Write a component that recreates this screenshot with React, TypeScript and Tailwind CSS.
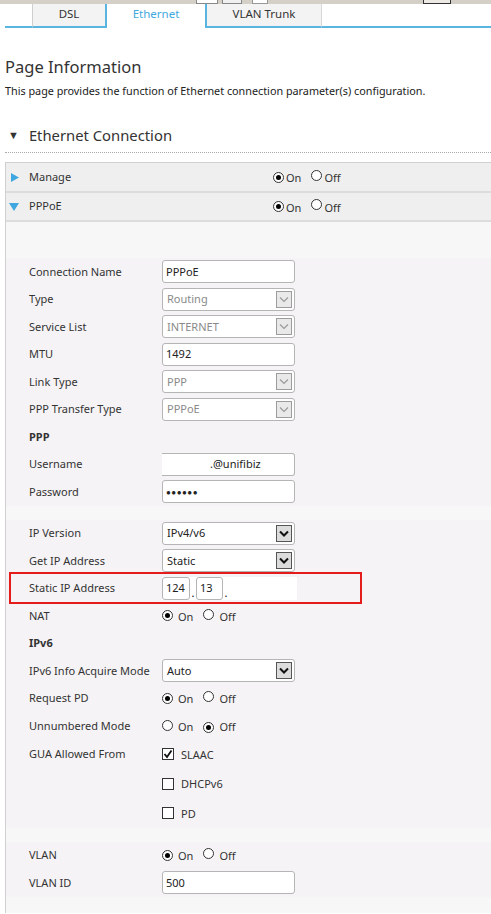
import React from "react";

const FONT = { fontFamily: '"Noto Sans", "Open Sans", Arial, sans-serif' };

function Radio({ checked }: { checked: boolean }) {
  return (
    <span className="inline-flex items-center justify-center w-[11px] h-[11px] rounded-full border border-[#333] bg-white shrink-0">
      {checked && <span className="w-[5px] h-[5px] rounded-full bg-black" />}
    </span>
  );
}

function RadioPair({ on, small }: { on: boolean; small?: boolean }) {
  return (
    <div className="flex items-center text-[11px] text-[#333]">
      <Radio checked={on} />
      <span className={small ? "ml-[2px] mt-[3px]" : "ml-[5px] mt-[2px]"}>On</span>
      <span className="ml-[10px]">
        <Radio checked={!on} />
      </span>
      <span className={small ? "ml-[2px] mt-[3px]" : "ml-[5px] mt-[2px]"}>Off</span>
    </div>
  );
}

function Chevron({ dark }: { dark: boolean }) {
  return (
    <svg width="10" height="7" viewBox="0 0 10 7">
      <path
        d="M1 1.5 L5 5.5 L9 1.5"
        fill="none"
        stroke={dark ? "#111" : "#9a9a9a"}
        strokeWidth={dark ? 2 : 1.2}
      />
    </svg>
  );
}

function Select({ value, disabled }: { value: string; disabled?: boolean }) {
  return (
    <div className="flex items-center w-[133px] h-[23px] border border-[#b5b5b5] rounded-[3px] bg-white pl-[4px] pr-[2px]">
      <span className={"text-[11px] " + (disabled ? "text-[#8a8a8a]" : "text-[#222]")}>{value}</span>
      <span
        className={
          "ml-auto flex items-center justify-center w-[16px] h-[17px] border " +
          (disabled ? "border-[#9c9c9c] bg-[#e9e9e9]" : "border-[#555] bg-[#dcdcdc]")
        }
      >
        <Chevron dark={!disabled} />
      </span>
    </div>
  );
}

function TextInput({ value, w = "w-[133px]" }: { value: string; w?: string }) {
  return (
    <div className={"flex items-center h-[23px] border border-[#b5b5b5] rounded-[3px] bg-white pl-[3px] text-[11px] text-[#222] " + w}>
      {value}
    </div>
  );
}

function Row({ label, children, h = "h-[27.5px]", bold }: { label?: string; children?: React.ReactNode; h?: string; bold?: boolean }) {
  return (
    <div className={"flex items-center pl-[23px] " + h}>
      <div className={"w-[133px] shrink-0 text-[11px] text-[#333] " + (bold ? "font-bold" : "")}>{label}</div>
      {children}
    </div>
  );
}

function Check({ checked, label }: { checked: boolean; label: string }) {
  return (
    <div className="flex items-center text-[11px] text-[#333]">
      <span className="flex items-center justify-center w-[12px] h-[12px] border border-[#333] bg-white">
        {checked && (
          <svg width="10" height="10" viewBox="0 0 10 10">
            <path d="M1.5 5 L4 8 L8.5 1.5" fill="none" stroke="#111" strokeWidth="1.8" />
          </svg>
        )}
      </span>
      <span className="ml-[7px] mt-[2px]">{label}</span>
    </div>
  );
}

export default function App() {
  return (
    <div className="w-[491px] h-[914px] overflow-hidden bg-white relative" style={FONT}>
      {/* top strip */}
      <div className="h-[4px] bg-[#d4d0c8] flex items-end overflow-hidden">
        <div className="ml-[196px] w-[22px] h-[4px] bg-white border border-t-0 border-[#888]" />
        <div className="ml-[4px] w-[20px] h-[4px] bg-[#f0f0f0] border border-t-0 border-[#888]" />
        <div className="ml-[10px] w-[16px] h-[4px] bg-white border border-t-0 border-[#999]" />
        <div className="ml-[155px] w-[28px] h-[4px] bg-[#ece9e4] border border-t-0 border-[#333]" />
      </div>
      {/* tabs */}
      <div className="flex h-[24px] text-[11.5px]">
        <div className="w-[5px]" />
        <div className="w-[27px] border-b-[2px] border-[#5ab4e0]" />
        <div className="w-[75px] bg-[#f3f3f3] border-l border-[#cfcfcf] border-r-[2px] border-r-[#5ab4e0] border-b-[2px] border-b-[#5ab4e0] flex items-start pt-[1px] justify-center text-[#333]">
          DSL
        </div>
        <div className="w-[98px] bg-white flex items-start pt-[1px] justify-center text-[#3fa9e0]">Ethernet</div>
        <div className="w-[117px] bg-[#f3f3f3] border-l-[2px] border-l-[#5ab4e0] border-r border-r-[#d8d8d8] border-b-[2px] border-b-[#5ab4e0] flex items-start pt-[1px] justify-center text-[#333]">
          VLAN Trunk
        </div>
        <div className="flex-1 border-b-[2px] border-[#5ab4e0]" />
      </div>

      <div className="pl-[5px]">
        <div className="mt-[27px] text-[16.5px] leading-[24px] text-[#333]">Page Information</div>
        <div className="mt-[5px] text-[10.8px] leading-[14px] text-[#222]">
          This page provides the function of Ethernet connection parameter(s) configuration.
        </div>
        <div className="mt-[26px] flex items-center h-[22px]">
          <span className="ml-[3px] text-[11px] text-[#333]">▼</span>
          <span className="ml-[10px] text-[14.8px] text-[#333]">Ethernet Connection</span>
        </div>
        <div className="mt-[6px] border-t border-dotted border-[#aaa]" />

        {/* panel */}
        <div className="mt-[9px] border-l border-t border-[#d0d0d0]">
          <div className="flex items-center h-[30px] bg-[#efefef] border-b-[2px] border-[#dcdcdc]">
            <svg className="ml-[5px]" width="8" height="9" viewBox="0 0 8 9">
              <path d="M0 0 L8 4.5 L0 9 Z" fill="#3ea7e0" />
            </svg>
            <span className="ml-[10px] text-[11px] text-[#333] w-[244px]">Manage</span>
            <RadioPair on small />
          </div>
          <div className="flex items-center h-[29px] bg-[#efefef] border-b-[2px] border-[#dcdcdc]">
            <svg className="ml-[3px]" width="10" height="8" viewBox="0 0 10 8">
              <path d="M0 0 L10 0 L5 8 Z" fill="#3ea7e0" />
            </svg>
            <span className="ml-[10px] text-[11px] text-[#333] w-[244px]">PPPoE</span>
            <RadioPair on small />
          </div>

          <div className="bg-[#f7f7f7] pt-[36px] pb-[16px]">
            <div className="bg-[#f6f3f6]">
              <Row label="Connection Name"><TextInput value="PPPoE" /></Row>
              <Row label="Type"><Select value="Routing" disabled /></Row>
              <Row label="Service List"><Select value="INTERNET" disabled /></Row>
              <Row label="MTU"><TextInput value="1492" /></Row>
              <Row label="Link Type"><Select value="PPP" disabled /></Row>
              <Row label="PPP Transfer Type"><Select value="PPPoE" disabled /></Row>
              <Row label="PPP" bold />
              <Row label="Username">
                <div className="flex items-center w-[133px] h-[23px] border-t border-r border-b border-[#b5b5b5] rounded-r-[3px] bg-white pl-[48px] text-[11px] text-[#222]">
                  .@unifibiz
                </div>
              </Row>
              <Row label="Password">
                <div className="flex items-center w-[133px] h-[23px] border border-[#b5b5b5] rounded-[3px] bg-white pl-[3px] text-[8px] tracking-[0.5px] text-[#222]">
                  ●●●●●●
                </div>
              </Row>
            </div>
            <div className="h-[14px]" />
            <div className="bg-[#f6f3f6]">
              <Row label="IP Version"><Select value="IPv4/v6" /></Row>
              <Row label="Get IP Address"><Select value="Static" /></Row>
              <div className="relative">
                <Row label="Static IP Address">
                  <div className="flex items-end h-[23px] bg-white w-[135px]">
                    <TextInput value="124" w="w-[28px]" />
                    <span className="w-[6px] text-center text-[11px] leading-[14px]">.</span>
                    <TextInput value="13" w="w-[27px]" />
                    <span className="w-[6px] text-center text-[11px] leading-[14px]">.</span>
                  </div>
                </Row>
                <div className="absolute left-[3px] top-[-3px] w-[353px] h-[32px] border-[2px] border-[#e41b1b]" />
              </div>
              <Row label="NAT"><RadioPair on /></Row>
              <Row label="IPv6" bold />
              <Row label="IPv6 Info Acquire Mode"><Select value="Auto" /></Row>
              <Row label="Request PD"><RadioPair on /></Row>
              <Row label="Unnumbered Mode"><RadioPair on={false} /></Row>
              <Row label="GUA Allowed From" h="h-[29px]"><Check checked label="SLAAC" /></Row>
              <Row h="h-[30px]"><Check checked={false} label="DHCPv6" /></Row>
              <Row h="h-[29px]"><Check checked={false} label="PD" /></Row>
            </div>
            <div className="h-[14px]" />
            <div className="bg-[#f6f3f6]">
              <Row label="VLAN"><RadioPair on /></Row>
              <Row label="VLAN ID"><TextInput value="500" /></Row>
            </div>
          </div>
        </div>
      </div>
    </div>
  );
}
